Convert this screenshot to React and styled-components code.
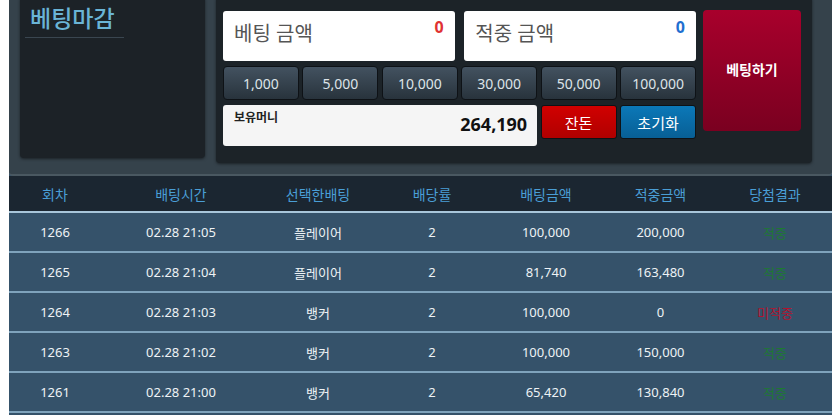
import React from "react";
import styled, { createGlobalStyle } from "styled-components";

const GlobalStyle = createGlobalStyle`
  body {
    margin: 0;
    background: #ffffff;
    font-family: "Noto Sans", "Noto Sans CJK KR", sans-serif;
  }
`;

const Page = styled.div`
  width: 823px;
  margin-left: 9px;
  overflow: hidden;
  height: 415px;
  background: #35526a;
`;

const TopBox = styled.div`
  display: flex;
  gap: 11px;
  margin-top: -10px;
  padding: 6px 20px 11px 11px;
  background: #35424b;
  border-bottom: 2px solid #4a5861;
  border-radius: 0 0 4px 4px;
`;

const ClosedPanel = styled.div`
  width: 185px;
  height: 162px;
  background: #1c2227;
  border-radius: 4px;
  box-shadow: 0 1px 3px rgba(0, 0, 0, 0.5);
  padding: 8px 0 0 5px;
  box-sizing: border-box;
`;

const ClosedTitle = styled.div`
  width: 94px;
  padding: 0 0 5px 5px;
  border-bottom: 1px solid #3a4650;
  color: #6ab4d6;
  font-size: 23px;
  font-weight: 500;
  line-height: 28px;
`;

const BetPanel = styled.div`
  flex: 1;
  display: flex;
  gap: 7px;
  background: #1c2328;
  border-radius: 4px;
  box-shadow: 0 1px 3px rgba(0, 0, 0, 0.5);
  padding: 15px 11px 17px 7px;
`;

const Controls = styled.div`
  flex: 1;
  display: grid;
  grid-template-columns: repeat(6, 1fr);
  column-gap: 3.5px;
  row-gap: 5px;
  grid-template-rows: 50px 34px 41px;
`;

const AmountBox = styled.div`
  grid-column: span 3;
  background: #ffffff;
  border-radius: 3px;
  display: flex;
  justify-content: space-between;
  padding: 0 11px;
  margin-right: ${(p) => (p.$first ? "3px" : "0")};
  margin-left: ${(p) => (p.$first ? "0" : "3px")};
`;

const AmountLabel = styled.span`
  color: #555;
  font-size: 20px;
  line-height: 46px;
`;

const AmountValue = styled.span`
  color: ${(p) => p.$color};
  font-size: 16px;
  font-weight: 700;
  line-height: 32px;
`;

const Chip = styled.button`
  font-family: inherit;
  background: linear-gradient(#435260, #28333c);
  border: 1px solid #0e1216;
  border-radius: 4px;
  color: #dde3e8;
  font-size: 14px;
  padding: 0;
  cursor: pointer;
`;

const MoneyBox = styled.div`
  grid-column: span 4;
  background: #f5f5f5;
  border-radius: 3px;
  display: flex;
  justify-content: space-between;
  padding: 0 10px 0 11px;
`;

const MoneyLabel = styled.span`
  color: #222;
  font-size: 12px;
  font-weight: 700;
  line-height: 26px;
`;

const MoneyValue = styled.span`
  color: #111;
  font-size: 18px;
  font-weight: 700;
  line-height: 38px;
`;

const ActionButton = styled.button`
  font-family: inherit;
  height: 34px;
  border-radius: 3px;
  border: 1px solid #0e1216;
  color: #fff;
  font-size: 15px;
  padding: 0;
  background: ${(p) =>
    p.$tone === "red"
      ? "linear-gradient(#d10000, #b00000)"
      : "linear-gradient(#0b78b8, #085f95)"};
`;

const BetButton = styled.button`
  font-family: inherit;
  width: 98px;
  height: 121px;
  margin-top: -1px;
  border: none;
  border-radius: 4px;
  background: linear-gradient(#a8002c, #7a0020);
  color: #fff;
  font-size: 14px;
  font-weight: 700;
  padding: 0 0 4px;
`;

const Table = styled.table`
  width: 100%;
  border-collapse: collapse;
  table-layout: fixed;
`;

const Th = styled.th`
  height: 35px;
  background: #1b2631;
  color: #4a9ed6;
  font-size: 14px;
  font-weight: 400;
  border-bottom: 2px solid #a8c6da;
  padding: 0;
`;

const Td = styled.td`
  height: 38px;
  background: #35526a;
  color: ${(p) => p.$color || "#eef2f5"};
  font-size: 13px;
  text-align: center;
  border-bottom: 2px solid #7fa3bc;
  padding: 0;
`;

const chips = ["1,000", "5,000", "10,000", "30,000", "50,000", "100,000"];

const columns = [
  ["회차", 92],
  ["배팅시간", 160],
  ["선택한배팅", 114],
  ["배당률", 114],
  ["배팅금액", 114],
  ["적중금액", 115],
  ["당첨결과", 114],
];

const rows = [
  ["1266", "02.28 21:05", "플레이어", "2", "100,000", "200,000", "적중"],
  ["1265", "02.28 21:04", "플레이어", "2", "81,740", "163,480", "적중"],
  ["1264", "02.28 21:03", "뱅커", "2", "100,000", "0", "미적중"],
  ["1263", "02.28 21:02", "뱅커", "2", "100,000", "150,000", "적중"],
  ["1261", "02.28 21:00", "뱅커", "2", "65,420", "130,840", "적중"],
];

export default function App() {
  return (
    <>
      <GlobalStyle />
      <Page>
        <TopBox>
          <ClosedPanel>
            <ClosedTitle>베팅마감</ClosedTitle>
          </ClosedPanel>
          <BetPanel>
            <Controls>
              <AmountBox $first>
                <AmountLabel>베팅 금액</AmountLabel>
                <AmountValue $color="#e03232">0</AmountValue>
              </AmountBox>
              <AmountBox>
                <AmountLabel>적중 금액</AmountLabel>
                <AmountValue $color="#1f6fd0">0</AmountValue>
              </AmountBox>
              {chips.map((c) => (
                <Chip key={c}>{c}</Chip>
              ))}
              <MoneyBox>
                <MoneyLabel>보유머니</MoneyLabel>
                <MoneyValue>264,190</MoneyValue>
              </MoneyBox>
              <ActionButton $tone="red">잔돈</ActionButton>
              <ActionButton $tone="blue">초기화</ActionButton>
            </Controls>
            <BetButton>베팅하기</BetButton>
          </BetPanel>
        </TopBox>
        <Table>
          <colgroup>
            {columns.map(([name, w]) => (
              <col key={name} style={{ width: w }} />
            ))}
          </colgroup>
          <thead>
            <tr>
              {columns.map(([name]) => (
                <Th key={name}>{name}</Th>
              ))}
            </tr>
          </thead>
          <tbody>
            {rows.map((r) => (
              <tr key={r[0]}>
                {r.map((v, i) => (
                  <Td
                    key={i}
                    $color={
                      i === 6 ? (v === "적중" ? "#1d7a32" : "#b3122e") : undefined
                    }
                  >
                    {v}
                  </Td>
                ))}
              </tr>
            ))}
          </tbody>
        </Table>
      </Page>
    </>
  );
}
